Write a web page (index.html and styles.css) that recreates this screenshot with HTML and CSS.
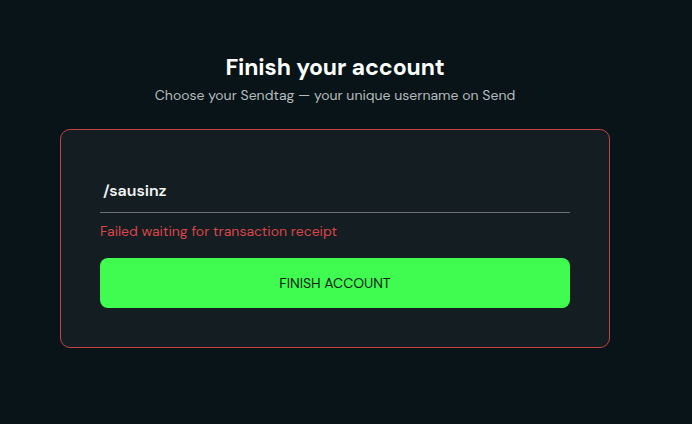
FILE: index.html
```html
<!DOCTYPE html>
<html lang="en">
<head>
<meta charset="utf-8">
<title>Finish your account</title>
<link rel="stylesheet" href="styles.css">
</head>
<body>
<main class="page">
  <header class="head">
    <h1 class="title">Finish your account</h1>
    <p class="subtitle">Choose your Sendtag — your unique username on Send</p>
  </header>
  <form class="card">
    <div class="field">
      <span class="field-text">/sausinz</span>
    </div>
    <p class="error">Failed waiting for transaction receipt</p>
    <button type="button" class="btn">FINISH ACCOUNT</button>
  </form>
</main>
</body>
</html>
```
FILE: styles.css
```css
* { box-sizing: border-box; }
html, body { margin: 0; padding: 0; }
body {
  background: #081418;
  font-family: "DM Sans", Inter, "Noto Sans", sans-serif;
  color: #ffffff;
  height: 424px;
}
.page {
  width: 550px;
  margin-left: 60px;
  padding-top: 52px;
  display: flex;
  flex-direction: column;
}
.head {
  display: flex;
  flex-direction: column;
  align-items: center;
}
.title {
  margin: 0;
  font-size: 23px;
  font-weight: 700;
  line-height: 30px;
  letter-spacing: -0.1px;
}
.subtitle {
  margin: 3px 0 0;
  font-size: 14px;
  line-height: 20px;
  color: #b5babc;
}
.card {
  margin-top: 24px;
  height: 219px;
  border: 1px solid #c2433f;
  border-radius: 10px;
  background: #131d22;
  padding: 39px 39px 39px;
  display: flex;
  flex-direction: column;
}
.field {
  height: 44px;
  border-bottom: 1px solid #6b7073;
  display: flex;
  align-items: center;
  padding-left: 3px;
}
.field-text {
  font-size: 16px;
  font-weight: 600;
  color: #f2f4f4;
}
.error {
  margin: 8px 0 0;
  font-size: 14px;
  line-height: 20px;
  color: #dc4549;
}
.btn {
  margin-top: 17px;
  height: 50px;
  border: 0;
  border-radius: 8px;
  background: #40fb50;
  color: #10261a;
  font-family: inherit;
  font-size: 14px;
  font-weight: 400;
  letter-spacing: 0;
}
```
